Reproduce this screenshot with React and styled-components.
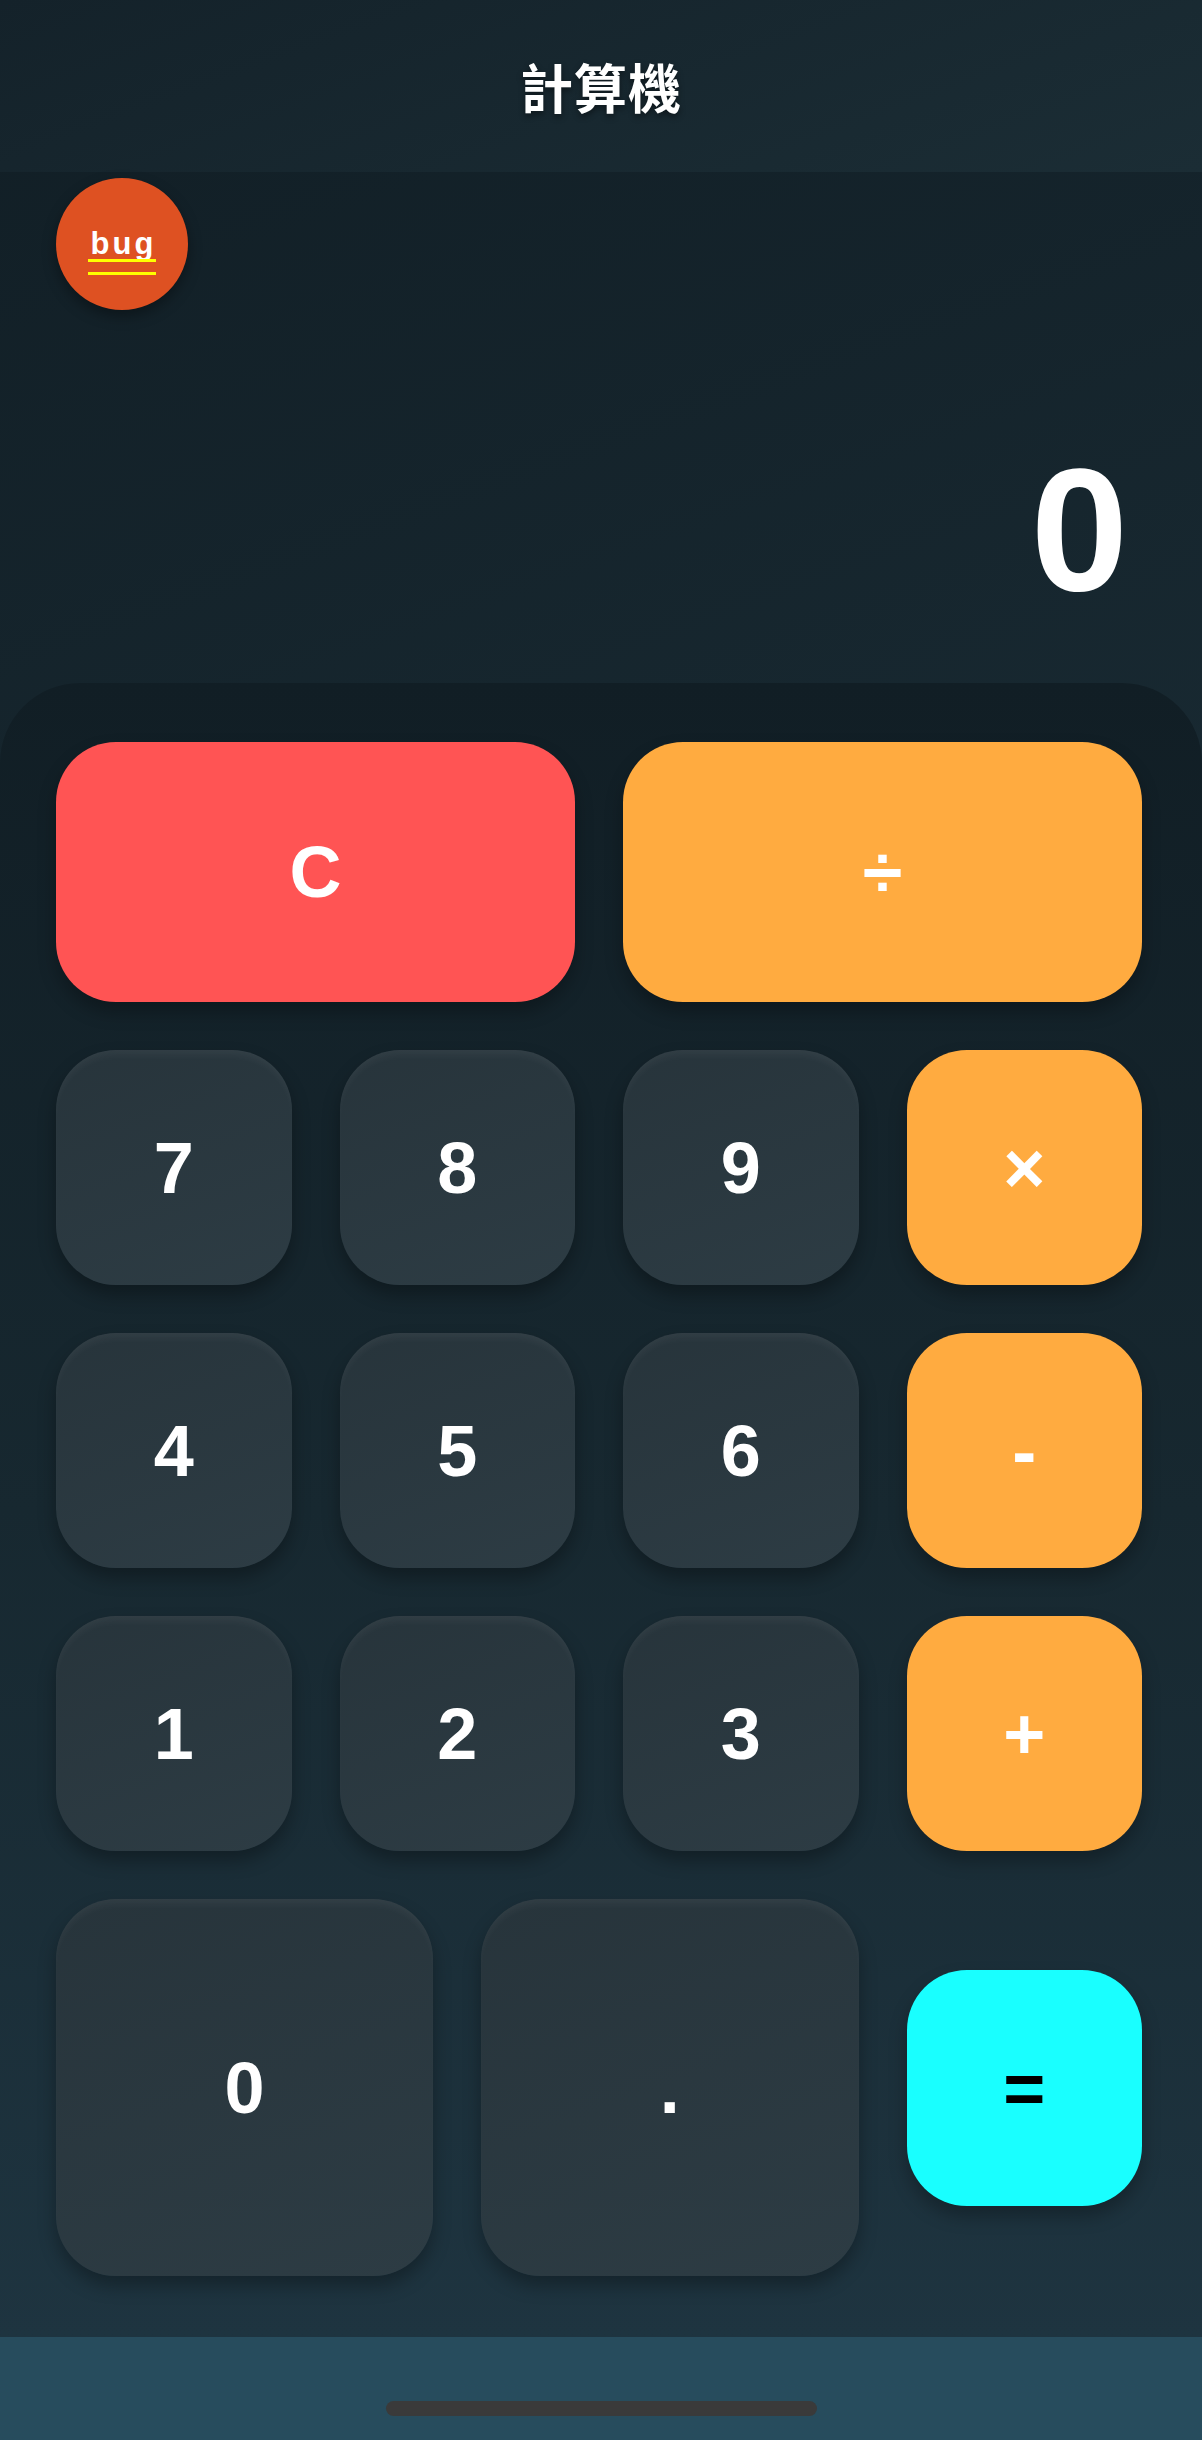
import React, { useState } from 'react'
import styled, { createGlobalStyle } from 'styled-components'

const GlobalStyle = createGlobalStyle`
    * { box-sizing: border-box; }
    html, body { margin: 0; padding: 0; }
    body {
        background: #13222a;
        font-family: "Liberation Sans", Arial, "Noto Sans CJK TC", sans-serif;
        -webkit-font-smoothing: antialiased;
    }
`

const Page = styled.div`
    width: 1202px;
    min-height: 2440px;
    display: flex;
    flex-direction: column;
    background: linear-gradient(160deg, #111e25 0%, #1a2c35 55%, #203945 100%);
`

const Header = styled.header`
    height: 172px;
    display: flex;
    align-items: center;
    justify-content: center;
    background: linear-gradient(160deg, #14222a 0%, #1b2d35 100%);
    h1 {
        margin: 0;
        color: #fff;
        font-family: "Noto Sans CJK TC", "Noto Sans CJK SC", sans-serif;
        font-size: 53px;
        font-weight: 700;
        letter-spacing: 1px;
        text-shadow: 0 3px 6px rgba(0, 0, 0, 0.45);
    }
`

const Display = styled.section`
    height: 511px;
    display: flex;
    flex-direction: column;
    padding: 6px 74px 66px 56px;
`

const BugButton = styled.button`
    width: 132px;
    height: 132px;
    border-radius: 50%;
    border: none;
    background: #de5122;
    box-shadow: 0 6px 14px rgba(0, 0, 0, 0.35);
    display: flex;
    align-items: center;
    justify-content: center;
    padding: 0;
    cursor: pointer;
    span {
        position: relative;
        color: #fff;
        font-family: "Liberation Sans", Arial, sans-serif;
        font-size: 31px;
        font-weight: 700;
        letter-spacing: 3px;
        line-height: 1;
        margin-top: -2px;
        padding-left: 3px;
        &::after {
            content: '';
            position: absolute;
            left: 0;
            right: 0;
            top: 31px;
            height: 10px;
            border-top: 3px solid #ffff00;
            border-bottom: 3px solid #ffff00;
        }
    }
`

const Value = styled.div`
    margin-top: auto;
    text-align: right;
    color: #fff;
    font-size: 175px;
    font-weight: 700;
    line-height: 1;
`

const Keypad = styled.section`
    flex: 1;
    display: flex;
    flex-direction: column;
    gap: 48px;
    padding: 59px 60px 59px 56px;
    border-radius: 80px 80px 0 0;
    background: linear-gradient(180deg, #111e25 0%, #172830 50%, #1e3440 100%);
`

const Row = styled.div`
    display: grid;
    grid-template-columns: ${p => p.$cols};
    gap: 48px;
    align-items: center;
`

const palette = {
    num: { bg: 'linear-gradient(160deg, #27343b 0%, #2d3c44 100%)', fg: '#fff' },
    clear: { bg: '#ff5454', fg: '#fff' },
    op: { bg: '#ffab40', fg: '#fff' },
    equal: { bg: '#19ffff', fg: '#000' },
}

const Key = styled.button`
    height: ${p => p.$h}px;
    border: none;
    border-radius: 60px;
    background: ${p => palette[p.$kind].bg};
    color: ${p => palette[p.$kind].fg};
    font-family: "Liberation Sans", Arial, sans-serif;
    font-size: 72px;
    font-weight: 700;
    display: flex;
    align-items: center;
    justify-content: center;
    padding: 0;
    cursor: pointer;
    box-shadow: ${p => p.$kind === 'num'
        ? 'inset 0 8px 10px -4px rgba(255,255,255,0.06), 0 10px 18px rgba(0,0,0,0.3)'
        : '0 10px 18px rgba(0,0,0,0.28)'};
`

const BottomBar = styled.footer`
    height: 103px;
    background: #274c5d;
    display: flex;
    align-items: flex-end;
    justify-content: center;
    padding-bottom: 24px;
    div {
        width: 431px;
        height: 15px;
        border-radius: 8px;
        background: #3a3a3a;
    }
`

const numRows = [
    ['7', '8', '9', '×'],
    ['4', '5', '6', '-'],
    ['1', '2', '3', '+'],
]

const App = () => {
    const [value, setValue] = useState('0')

    const press = (k) => {
        if (k === 'C') return setValue('0')
        if (/[0-9.]/.test(k)) setValue(v => (v === '0' && k !== '.' ? k : v + k))
    }

    return (
        <>
            <GlobalStyle />
            <Page>
                <Header><h1>計算機</h1></Header>
                <Display>
                    <BugButton><span>bug</span></BugButton>
                    <Value>{value}</Value>
                </Display>
                <Keypad>
                    <Row $cols="1fr 1fr">
                        <Key $kind="clear" $h={260} onClick={() => press('C')}>C</Key>
                        <Key $kind="op" $h={260}>÷</Key>
                    </Row>
                    {numRows.map((row, i) => (
                        <Row key={i} $cols="repeat(4, 1fr)">
                            {row.map(k => (
                                <Key key={k} $kind={/\d/.test(k) ? 'num' : 'op'} $h={235}
                                    onClick={() => press(k)}>{k}</Key>
                            ))}
                        </Row>
                    ))}
                    <Row $cols="1fr 1fr 235.5px">
                        <Key $kind="num" $h={377} onClick={() => press('0')}>0</Key>
                        <Key $kind="num" $h={377} onClick={() => press('.')}>.</Key>
                        <Key $kind="equal" $h={236}>=</Key>
                    </Row>
                </Keypad>
                <BottomBar><div /></BottomBar>
            </Page>
        </>
    )
}

export default App
